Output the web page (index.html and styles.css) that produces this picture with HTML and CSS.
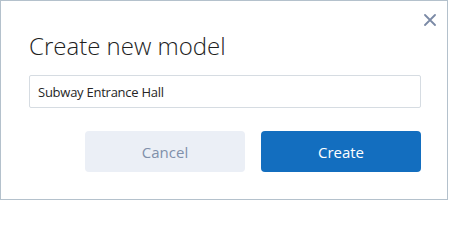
FILE: index.html
```html
<!DOCTYPE html>
<html lang="en">
<head>
<meta charset="utf-8">
<title>Create new model</title>
<link rel="stylesheet" href="styles.css">
</head>
<body>
<div class="dialog">
  <button class="close" aria-label="Close">
    <svg width="12" height="12" viewBox="0 0 12 12"><path d="M1 1L11 11M11 1L1 11" stroke="#7b8aa6" stroke-width="1.8" stroke-linecap="round" fill="none"/></svg>
  </button>
  <h1 class="title">Create new model</h1>
  <input class="field" type="text" value="Subway Entrance Hall">
  <div class="actions">
    <button class="btn btn-cancel">Cancel</button>
    <button class="btn btn-create">Create</button>
  </div>
</div>
</body>
</html>
```
FILE: styles.css
```css
html, body {
  margin: 0;
  padding: 0;
  background: #ffffff;
}
body {
  font-family: "Open Sans", "Noto Sans", sans-serif;
}
.dialog {
  position: relative;
  box-sizing: border-box;
  width: 448px;
  height: 200px;
  border: 1px solid #b4c1cc;
  background: #ffffff;
  padding: 0 27px 0 28px;
  display: flex;
  flex-direction: column;
}
.close {
  position: absolute;
  top: 13px;
  right: 11px;
  width: 12px;
  height: 12px;
  padding: 0;
  border: 0;
  background: none;
  display: flex;
}
.title {
  margin: 29px 0 0 0;
  font-size: 24px;
  font-weight: 300;
  color: #1e1e1e;
  line-height: 32px;
  height: 32px;
}
.field {
  margin-top: 13px;
  box-sizing: border-box;
  width: 392px;
  height: 33px;
  border: 1px solid #d6dce2;
  border-radius: 2px;
  padding: 0 7px 0 8px;
  font-family: "Open Sans", "Noto Sans", sans-serif;
  font-size: 13px;
  letter-spacing: -0.25px;
  color: #262626;
  outline: none;
}
.actions {
  margin-top: 23px;
  display: flex;
  justify-content: flex-end;
  gap: 16px;
  width: 392px;
}
.btn {
  width: 160px;
  height: 41px;
  border: 0;
  border-radius: 4px;
  font-family: "Open Sans", "Noto Sans", sans-serif;
  font-size: 15px;
  padding: 0;
}
.btn-cancel {
  background: #ebeff6;
  color: #8090aa;
}
.btn-create {
  background: #136ebf;
  color: #ffffff;
}
```
